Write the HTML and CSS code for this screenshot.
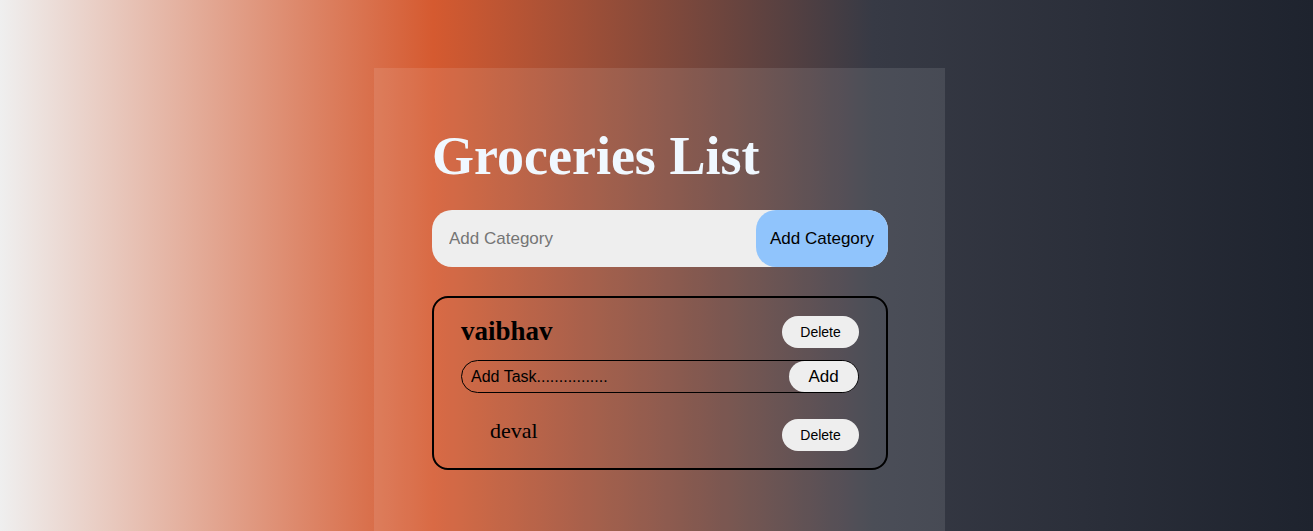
FILE: index.html
```html
<!DOCTYPE html>
<html lang="en">
<head>
<meta charset="utf-8">
<title>Groceries List</title>
<link rel="stylesheet" href="styles.css">
</head>
<body>
  <main class="container">
    <h1 class="title">Groceries List</h1>
    <form class="category-form">
      <input class="category-input" type="text" placeholder="Add Category">
      <button class="category-btn" type="button">Add Category</button>
    </form>
    <section class="card">
      <div class="card-head">
        <h2 class="card-title">vaibhav</h2>
        <button class="pill-btn" type="button">Delete</button>
      </div>
      <div class="task-form">
        <input class="task-input" type="text" placeholder="Add Task................">
        <button class="add-btn" type="button">Add</button>
      </div>
      <ul class="items">
        <li class="item">
          <span class="item-name">deval</span>
          <button class="pill-btn" type="button">Delete</button>
        </li>
      </ul>
    </section>
  </main>
</body>
</html>
```
FILE: styles.css
```css
html, body {
  margin: 0;
  height: 100%;
}
body {
  background: linear-gradient(to right, #efefef 0%, #d55a30 33%, #373a45 66.5%, #1e232e 100%);
  font-family: "Liberation Serif", "Times New Roman", serif;
  overflow: hidden;
}
.container {
  box-sizing: border-box;
  width: 571px;
  min-height: calc(100vh - 68px);
  margin: 68px 0 0 374px;
  padding: 56px 57px 0 58px;
  background: rgba(255, 255, 255, 0.1);
}
.title {
  margin: 0 0 22px;
  font-size: 54px;
  line-height: 64px;
  font-weight: bold;
  color: #f0f8ff;
}
.category-form {
  display: flex;
  height: 57px;
  margin: 0 0 29px;
  background: #eeeeee;
  border-radius: 20px;
}
.category-input {
  flex: 1;
  min-width: 0;
  border: none;
  outline: none;
  background: transparent;
  padding: 0 0 0 17px;
  font-family: "Liberation Sans", Arial, sans-serif;
  font-size: 17px;
  color: #000;
}
.category-input::placeholder {
  color: #757575;
}
.category-btn {
  width: 132px;
  border: none;
  border-radius: 20px;
  background: #90c4fc;
  font-family: "Liberation Sans", Arial, sans-serif;
  font-size: 17px;
  color: #000;
  padding: 0;
}
.card {
  border: 2px solid #000;
  border-radius: 16px;
  padding: 18px 27px 17px;
}
.card-head {
  display: flex;
  justify-content: space-between;
  align-items: flex-start;
  margin-bottom: 12px;
}
.card-title {
  margin: 0;
  font-size: 27px;
  font-weight: bold;
  line-height: 31px;
  color: #000;
}
.pill-btn {
  width: 77px;
  height: 32px;
  border: none;
  border-radius: 16px;
  background: #eeeeee;
  font-family: "Liberation Sans", Arial, sans-serif;
  font-size: 14px;
  color: #000;
  padding: 0;
}
.task-form {
  display: flex;
  height: 33px;
  box-sizing: border-box;
  border: 1px solid #000;
  border-radius: 17px;
}
.task-input {
  flex: 1;
  min-width: 0;
  border: none;
  outline: none;
  background: transparent;
  padding: 0 0 0 9px;
  font-family: "Liberation Sans", Arial, sans-serif;
  font-size: 16px;
  color: #000;
}
.task-input::placeholder {
  color: #000;
}
.add-btn {
  width: 69px;
  border: none;
  border-radius: 16px;
  background: #eeeeee;
  font-family: "Liberation Sans", Arial, sans-serif;
  font-size: 17px;
  color: #000;
  padding: 0;
}
.items {
  list-style: none;
  margin: 26px 0 0;
  padding: 0;
}
.item {
  display: flex;
  justify-content: space-between;
  align-items: flex-start;
}
.item-name {
  padding-left: 29px;
  font-size: 22px;
  line-height: 24px;
  color: #000;
}
```
